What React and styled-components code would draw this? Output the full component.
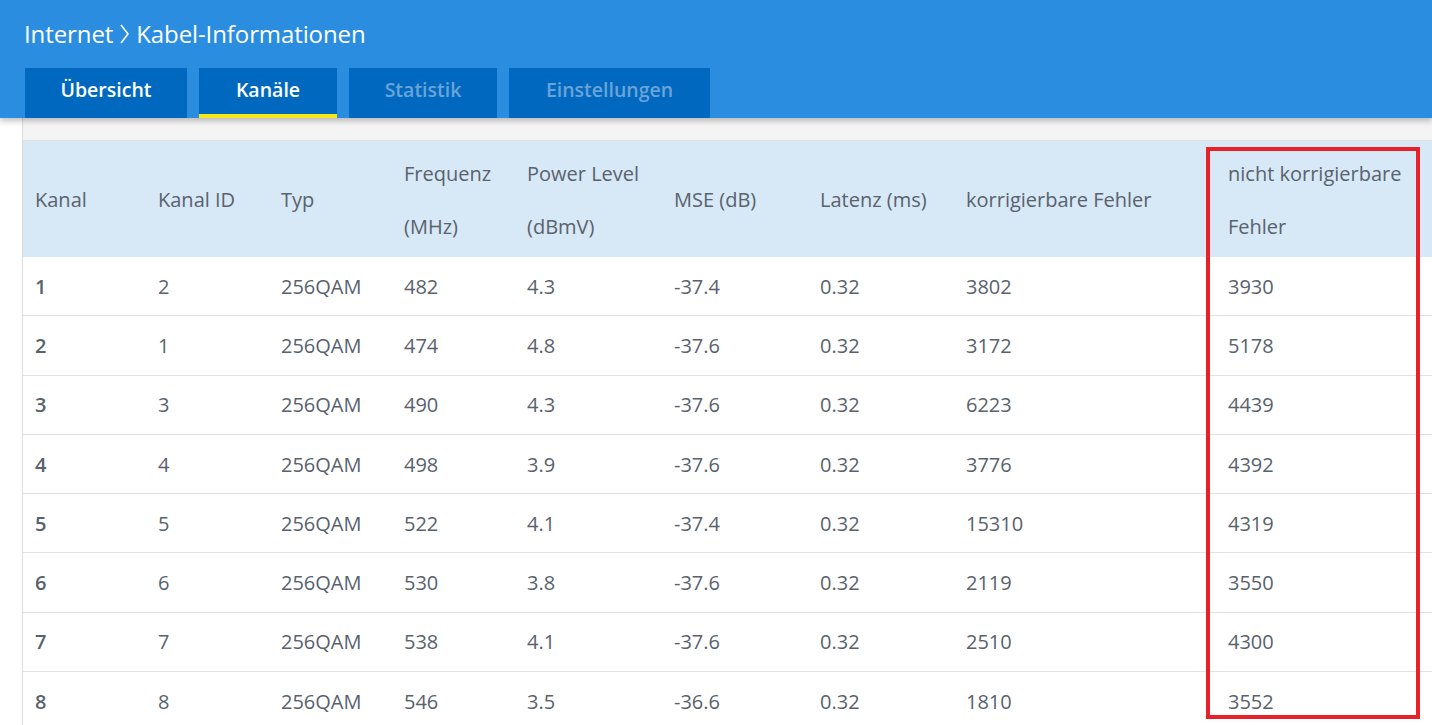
import React from "react";
import styled, { createGlobalStyle } from "styled-components";

const Global = createGlobalStyle`
  html, body { margin: 0; padding: 0; background: #fff; }
  body { font-family: "Open Sans", "Liberation Sans", sans-serif; overflow: hidden; }
`;

const Page = styled.div`
  width: 1432px;
  height: 725px;
  overflow: hidden;
  position: relative;
`;

const Header = styled.header`
  background: #2a8de0;
  height: 118px;
  padding: 0 0 0 24px;
  box-sizing: border-box;
  box-shadow: 0 3px 6px rgba(0, 0, 0, 0.25);
  position: relative;
  z-index: 2;
  display: flex;
  flex-direction: column;
`;

const Title = styled.h1`
  margin: 0;
  padding-bottom: 1px;
  height: 68px;
  box-sizing: border-box;
  color: #fff;
  font-size: 24px;
  font-weight: 400;
  letter-spacing: -0.1px;
  display: flex;
  align-items: center;
  gap: 6px;
`;

const Tabs = styled.nav`
  display: flex;
  gap: 12px;
  margin-left: 1px;
`;

const Tab = styled.div`
  width: ${p => p.w}px;
  height: 50px;
  background: #0069bf;
  color: ${p => (p.muted ? "#6aa3d8" : "#fff")};
  font-size: 19.5px;
  font-weight: 600;
  display: flex;
  align-items: center;
  justify-content: center;
  box-sizing: border-box;
  border-bottom: 4px solid ${p => (p.active ? "#f5e71a" : "transparent")};
  padding-bottom: 4px;
`;

const Panel = styled.div`
  margin-left: 22px;
  border-left: 1px solid #dcdcdc;
`;

const Gap = styled.div`
  height: 22px;
  background: #f4f4f4;
  border-bottom: 1px solid #e2e2e2;
`;

const Table = styled.table`
  border-collapse: collapse;
  width: 1410px;
  table-layout: fixed;
  color: #59626d;
  font-size: 20px;
`;

const Th = styled.th`
  background: #d7e8f6;
  text-align: left;
  font-weight: 400;
  line-height: 53px;
  padding: 5px 0 4px 12px;
  height: 116px;
  box-sizing: border-box;
  vertical-align: middle;
  white-space: nowrap;
`;

const Td = styled.td`
  padding: 0 0 0 12px;
  height: 58.3px;
  border-bottom: 1px solid #e2e2e2;
  font-weight: ${p => (p.bold ? 600 : 400)};
  white-space: nowrap;
`;

const Highlight = styled.div`
  position: absolute;
  left: 1206px;
  top: 147px;
  width: 214px;
  height: 572px;
  border: 4px solid #e8202a;
  box-sizing: border-box;
  pointer-events: none;
  z-index: 3;
`;

const cols = [123, 123, 123, 123, 147, 146, 146, 262, 217];
const heads = [
  "Kanal",
  "Kanal ID",
  "Typ",
  ["Frequenz", "(MHz)"],
  ["Power Level", "(dBmV)"],
  "MSE (dB)",
  "Latenz (ms)",
  "korrigierbare Fehler",
  ["nicht korrigierbare", "Fehler"],
];

const rows = [
  [1, 2, 482, 4.3, -37.4, 3802, 3930],
  [2, 1, 474, 4.8, -37.6, 3172, 5178],
  [3, 3, 490, 4.3, -37.6, 6223, 4439],
  [4, 4, 498, 3.9, -37.6, 3776, 4392],
  [5, 5, 522, 4.1, -37.4, 15310, 4319],
  [6, 6, 530, 3.8, -37.6, 2119, 3550],
  [7, 7, 538, 4.1, -37.6, 2510, 4300],
  [8, 8, 546, 3.5, -36.6, 1810, 3552],
];

export default function App() {
  return (
    <Page>
      <Global />
      <Header>
        <Title>
          <span>Internet</span>
          <svg width="11" height="22" viewBox="0 0 11 22">
            <path d="M2 2 L9 11 L2 20" fill="none" stroke="#fff" strokeWidth="1.6" />
          </svg>
          <span>Kabel-Informationen</span>
        </Title>
        <Tabs>
          <Tab w={162}>Übersicht</Tab>
          <Tab w={138} active>Kanäle</Tab>
          <Tab w={148} muted>Statistik</Tab>
          <Tab w={201} muted>Einstellungen</Tab>
        </Tabs>
      </Header>
      <Panel>
        <Gap />
        <Table>
          <colgroup>
            {cols.map((w, i) => (
              <col key={i} style={{ width: w }} />
            ))}
          </colgroup>
          <thead>
            <tr>
              {heads.map((h, i) => (
                <Th key={i}>
                  {Array.isArray(h) ? (
                    <>
                      {h[0]}
                      <br />
                      {h[1]}
                    </>
                  ) : (
                    h
                  )}
                </Th>
              ))}
            </tr>
          </thead>
          <tbody>
            {rows.map(r => (
              <tr key={r[0]}>
                <Td bold>{r[0]}</Td>
                <Td>{r[1]}</Td>
                <Td>256QAM</Td>
                <Td>{r[2]}</Td>
                <Td>{r[3].toFixed(1)}</Td>
                <Td>{r[4].toFixed(1)}</Td>
                <Td>0.32</Td>
                <Td>{r[5]}</Td>
                <Td>{r[6]}</Td>
              </tr>
            ))}
          </tbody>
        </Table>
      </Panel>
      <Highlight />
    </Page>
  );
}
